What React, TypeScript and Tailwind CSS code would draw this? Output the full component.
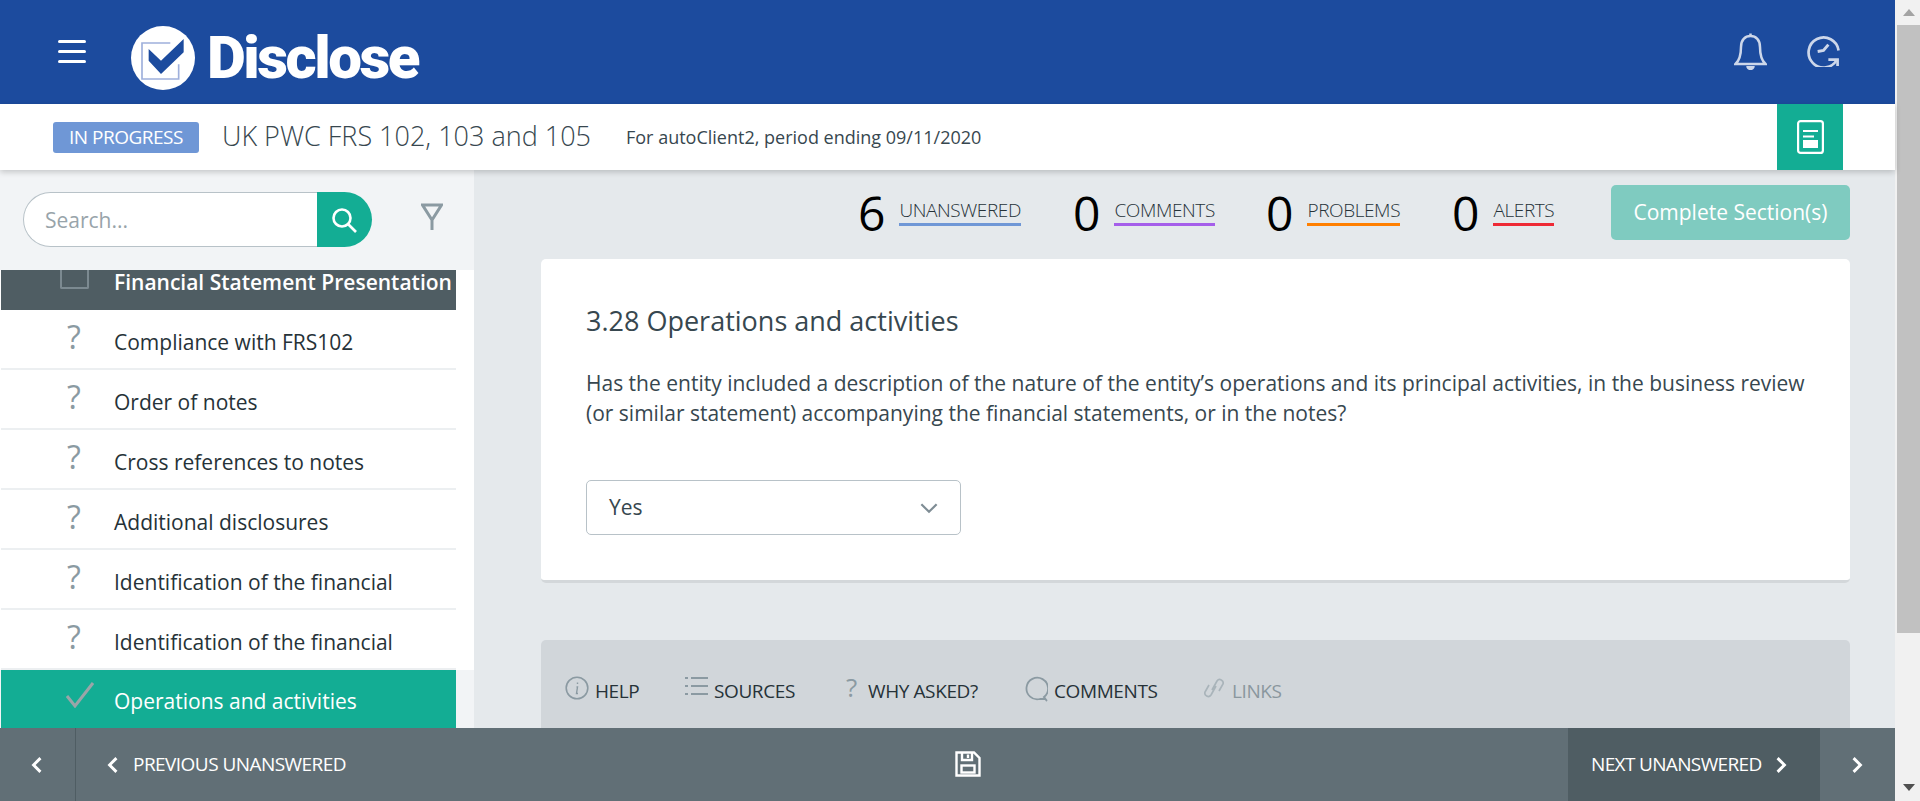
import React from "react";

const font = { fontFamily: '"Open Sans", "Liberation Sans", sans-serif' };

function Chevron({ dir, className }: { dir: "left" | "right" | "down"; className?: string }) {
  const d = dir === "left" ? "M11 2 L3 10 L11 18" : dir === "right" ? "M3 2 L11 10 L3 18" : "M1 2 L8 9 L15 2";
  return (
    <svg viewBox={dir === "down" ? "0 0 16 11" : "0 0 14 20"} className={className} fill="none" stroke="currentColor" strokeWidth={dir === "down" ? 2 : 3.4}>
      <path d={d} />
    </svg>
  );
}

function Logo() {
  return (
    <svg viewBox="0 0 192 192" className="w-[64px] h-[64px] shrink-0">
      <circle cx="96" cy="96" r="96" fill="#fff" />
      <path d="M118 51 H33 V159 H143 V115" fill="none" stroke="#9fb0dc" strokeWidth="5" />
      <path d="M53 69 L90 104 L158 39 V79 L90 144 L53 104 Z" fill="#1c4b9e" />
    </svg>
  );
}

function Stat({ n, label, bar, className }: { n: number; label: string; bar: string; className: string }) {
  return (
    <div className={`flex items-center ${className}`}>
      <span className="mt-[4px] text-[48px] leading-none font-normal text-black">{n}</span>
      <span className={`ml-[14px] text-[19px] leading-[26px] font-light tracking-[-0.4px] text-[#263238] border-b-[3px] ${bar}`}>{label}</span>
    </div>
  );
}

const rows = [
  "Compliance with FRS102",
  "Order of notes",
  "Cross references to notes",
  "Additional disclosures",
  "Identification of the financial",
  "Identification of the financial",
];

function Sidebar() {
  return (
    <aside className="w-[474px] shrink-0 flex flex-col bg-[#f2f4f6]">
      <div className="h-[98px] shrink-0 pt-[22px] pl-[23px] flex items-start">
        <div className="flex w-[349px] h-[55px]">
          <div className="flex-1 bg-white border border-r-0 border-[#b8c2c8] rounded-l-full pl-[21px] pt-[2px] flex items-center text-[21px] text-[#98a4aa]">Search...</div>
          <div className="w-[55px] bg-[#13ad94] rounded-r-full flex items-center justify-center pr-[2px]">
            <svg viewBox="0 0 26 26" className="w-[26px] h-[26px]" fill="none" stroke="#fff" strokeWidth="2.6"><circle cx="11" cy="11" r="8.5" /><path d="M17 17 L25 25" /></svg>
          </div>
        </div>
        <svg viewBox="0 0 22 28" className="w-[22px] h-[28px] ml-[49px] mt-[11px]" fill="none" stroke="#8b9aa2" strokeWidth="3"><path d="M1.5 2 H20.5 L11 17 Z M11 17 V27" /></svg>
      </div>
      <div className="flex-1 min-h-0 overflow-hidden pt-[2px]">
        <div className="bg-white pl-[1px] pr-[18px] h-[400px]">
          <div className="h-[40px] bg-[#4f5d63] flex">
            <div className="w-[29px] h-[19px] ml-[59px] border-2 border-t-0 border-[#7c8a91] rounded-b-[2px] shrink-0" />
            <span className="ml-[25px] -mt-[2px] text-[21px] leading-[28px] font-semibold text-white whitespace-nowrap">Financial Statement Presentation</span>
          </div>
          {rows.map((r, i) => (
            <div key={i} className="h-[60px] flex items-center border-b-2 border-[#eceff1]">
              <span className="w-[113px] pl-[66px] text-[32px] leading-none text-[#8b9aa2] font-normal -mt-[5px]">?</span>
              <span className="text-[21px] mt-[8px] text-[#263238]">{r}</span>
            </div>
          ))}
          <div className="h-[60px] bg-[#13ad94] flex items-center">
            <svg viewBox="0 0 28 26" className="w-[28px] h-[26px] ml-[65px] mr-[20px] -mt-[10px]" fill="none" stroke="#9aa5a8" strokeWidth="3"><path d="M1 14 L9 24 L27 1" /></svg>
            <span className="text-[21px] mt-[3px] text-white">Operations and activities</span>
          </div>
        </div>
      </div>
    </aside>
  );
}

function Tool({ icon, label, className, muted }: { icon: React.ReactNode; label: string; className: string; muted?: boolean }) {
  return (
    <div className={`flex items-end ${className}`}>
      {icon}
      <span className={`text-[19px] leading-[26px] font-normal tracking-[-0.4px] ${muted ? "text-[#8a979e]" : "text-[#263238]"}`}>{label}</span>
    </div>
  );
}

function Main() {
  return (
    <main className="flex-1 min-w-0 bg-[#e5e9ec] overflow-hidden">
      <div className="h-[89px] flex items-start pt-[15px] pl-[384px]">
        <Stat n={6} label="UNANSWERED" bar="border-[#6f97d6]" className="w-[215px]" />
        <Stat n={0} label="COMMENTS" bar="border-[#a55eea]" className="w-[193px]" />
        <Stat n={0} label="PROBLEMS" bar="border-[#ff7f00]" className="w-[186px]" />
        <Stat n={0} label="ALERTS" bar="border-[#ee2a35]" className="w-[159px]" />
        <div className="w-[239px] h-[55px] bg-[#7fcbc0] rounded-[5px] flex items-center justify-center text-[21px] text-white">Complete Section(s)</div>
      </div>
      <section className="ml-[67px] w-[1309px] h-[324px] bg-white rounded-[5px] border-b-[3px] border-[#d3d7da] pl-[45px] pr-[30px] pt-[44px]">
        <h1 className="text-[27px] leading-[36px] text-[#37474f] font-normal">3.28 Operations and activities</h1>
        <p className="mt-[29px] text-[21px] leading-[30px] text-[#37474f]">
          Has the entity included a description of the nature of the entity’s operations and its principal activities, in the business review (or similar statement) accompanying the financial statements, or in the notes?
        </p>
        <div className="mt-[52px] w-[375px] h-[55px] border border-[#b8c2c8] rounded-[5px] flex items-center justify-between pl-[22px] pr-[22px] text-[21px] text-[#37474f]">
          <span>Yes</span>
          <Chevron dir="down" className="w-[18px] h-[12px] text-[#7f8d95]" />
        </div>
      </section>
      <div className="ml-[67px] mt-[57px] w-[1309px] h-[100px] bg-[#d1d6da] rounded-t-[5px] flex items-start pt-[36px] pl-[24px]">
        <Tool className="w-[120px]" label="HELP" icon={
          <svg viewBox="0 0 24 24" className="w-[24px] h-[24px] mr-[6px] mb-[4px]" fill="none" stroke="#8b9aa2" strokeWidth="1.6"><circle cx="12" cy="12" r="10.8" /><path d="M12.5 6.5 V8 M11.5 11 H12.5 L11.5 17.5 H13" strokeWidth="1.4" /></svg>
        } />
        <Tool className="w-[157px]" label="SOURCES" icon={
          <svg viewBox="0 0 23 20" className="w-[23px] h-[20px] mr-[6px] mb-[8px]" fill="none" stroke="#8b9aa2" strokeWidth="2"><path d="M0 2 H3 M0 10 H3 M0 18 H3 M6 2 H23 M6 10 H23 M6 18 H23" /></svg>
        } />
        <Tool className="w-[182px]" label="WHY ASKED?" icon={
          <span className="w-[26px] h-[22px] pl-[4px] text-[26px] leading-[22px] mb-[6px] font-normal text-[#8b9aa2]">?</span>
        } />
        <Tool className="w-[180px]" label="COMMENTS" icon={
          <svg viewBox="0 0 24 26" className="w-[24px] h-[26px] mr-[6px] mb-[2px]" fill="none" stroke="#8b9aa2" strokeWidth="1.8"><path d="M23 25 C21 23 21 22 20 21 A10.8 10.8 0 1 0 16 23 H21" /></svg>
        } />
        <Tool className="w-[90px]" muted label="LINKS" icon={
          <svg viewBox="0 0 20 24" className="w-[20px] h-[24px] mr-[8px] mb-[4px]" fill="none" stroke="#a9b4ba" strokeWidth="1.7"><path d="M8 14 L13 5 A3.4 3.4 0 0 1 19 8 L15 15 M12 10 L7 19 A3.4 3.4 0 0 1 1 16 L5 9" /></svg>
        } />
      </div>
    </main>
  );
}

export default function App() {
  return (
    <div style={font} className="w-full h-[801px] flex overflow-hidden bg-[#f1f1f1]">
      <div className="w-[1895px] shrink-0 flex flex-col h-full">
        <header className="h-[104px] shrink-0 bg-[#1c4b9e] flex items-center">
          <div className="ml-[58px] w-[28px] flex flex-col gap-[7px] -mt-[2px]">
            <div className="h-[3px] bg-white rounded" /><div className="h-[3px] bg-white rounded" /><div className="h-[3px] bg-white rounded" />
          </div>
          <div className="ml-[45px] mt-[11px]"><Logo /></div>
          <span className="ml-[12px] mt-[11px] text-[60px] leading-none font-black text-white tracking-[-2.5px]" style={{ fontFamily: 'Roboto, sans-serif' }}>Disclose</span>
          <div className="ml-auto flex items-center mr-[55px] gap-[40px] -mt-[3px]">
            <svg viewBox="0 0 33 38" className="w-[33px] h-[38px]" fill="none" stroke="#cdd7ea" strokeWidth="2.5"><path d="M1.5 32 C7 27 7 20 7 15 C7 8 11 4 16.5 4 C22 4 26 8 26 15 C26 20 26 27 31.5 32 Z" /><path d="M16.5 4 V1.5" /><path d="M13.5 34 A3 3 0 0 0 19.5 34" fill="#cdd7ea" /></svg>
            <svg viewBox="0 0 34 34" className="w-[33px] h-[33px]" fill="none" stroke="#cdd7ea" strokeWidth="2.8"><path d="M31 26 A15.5 15.5 0 1 1 32.5 17" /><path d="M22 26.5 H31.5 V33" /><path d="M22 11 L17 17 L11 18" strokeWidth="3" /></svg>
          </div>
        </header>
        <div className="relative z-10 h-[66px] shrink-0 bg-white shadow-[0_2px_6px_rgba(0,0,0,0.2)] flex items-center">
          <span className="ml-[53px] w-[146px] h-[31px] pt-[1px] bg-[#6f97d6] rounded-[3px] text-white text-[19px] tracking-[-0.5px] flex items-center justify-center">IN PROGRESS</span>
          <span className="ml-[23px] text-[27px] font-light text-[#37474f] -mt-[1px]">UK PWC FRS 102, 103 and 105</span>
          <span className="ml-[35px] text-[18px] text-[#37474f]">For autoClient2, period ending 09/11/2020</span>
          <div className="ml-auto mr-[52px] w-[66px] h-[66px] bg-[#13ad94] flex items-center justify-center">
            <svg viewBox="0 0 27 34" className="w-[27px] h-[34px]" fill="none" stroke="#fff" strokeWidth="2.2"><rect x="1.1" y="1.1" width="24.8" height="31.8" rx="2.5" /><path d="M6 11 H21 M6 16.5 H17" /><rect x="6" y="20" width="15" height="8" fill="#fff" stroke="none" /></svg>
          </div>
        </div>
        <div className="flex-1 min-h-0 flex">
          <Sidebar />
          <Main />
        </div>
        <footer className="h-[73px] shrink-0 bg-[#616f76] flex items-stretch text-white relative z-10">
          <div className="w-[76px] border-r border-[#4f5d63] flex items-center justify-center pr-[2px]"><Chevron dir="left" className="w-[12px] h-[18px]" /></div>
          <div className="w-[892px] flex items-center pl-[31px]">
            <Chevron dir="left" className="w-[12px] h-[18px]" />
            <span className="ml-[14px] text-[19px] tracking-[-0.55px]">PREVIOUS UNANSWERED</span>
          </div>
          <div className="flex items-center -ml-[13px] -mt-[2px]">
            <svg viewBox="0 0 26 26" className="w-[26px] h-[26px]" fill="none" stroke="#fff" strokeWidth="2.4"><path d="M1.5 1.5 H19 L24.5 7 V24.5 H1.5 Z" /><path d="M7 2 V9 H17 V2" /><path d="M13 3.5 V7" /><rect x="6.5" y="14.5" width="13" height="7" /></svg>
          </div>
          <div className="ml-auto w-[252px] bg-[#4f5d63] flex items-center pl-[23px]">
            <span className="text-[19px] tracking-[-0.65px]">NEXT UNANSWERED</span>
            <Chevron dir="right" className="ml-[13px] w-[12px] h-[18px]" />
          </div>
          <div className="w-[75px] flex items-center pl-[31px]"><Chevron dir="right" className="w-[12px] h-[18px]" /></div>
        </footer>
      </div>
      <div className="flex-1 flex flex-col items-center pl-[2px]">
        <svg viewBox="0 0 12 7" className="w-[12px] h-[7px] mt-[9px] mb-[9px]"><path d="M6 0 L12 7 H0 Z" fill="#a3a3a3" /></svg>
        <div className="w-full h-[608px] bg-[#c1c1c1]" />
        <svg viewBox="0 0 12 7" className="w-[12px] h-[7px] mt-auto mb-[10px]"><path d="M0 0 H12 L6 7 Z" fill="#505050" /></svg>
      </div>
    </div>
  );
}
